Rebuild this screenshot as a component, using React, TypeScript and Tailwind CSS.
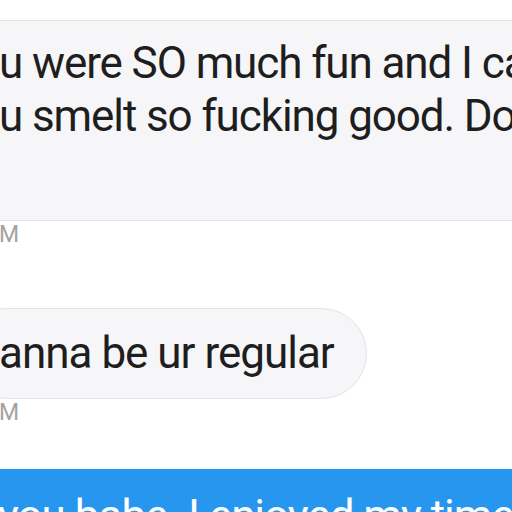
import React from "react";

const font = { fontFamily: "Roboto, 'Liberation Sans', sans-serif" };

const Stamp = ({ text }: { text: string }) => (
  <div className="-ml-[1px] mt-[2px] text-[23px] leading-none text-[#a3a3a3]">
    {text}
  </div>
);

const App = () => {
  return (
    <div
      style={font}
      className="w-[512px] h-[512px] overflow-hidden bg-white flex flex-col text-[#1e1e20]"
    >
      <div className="mt-[20px] h-[201px] -mx-[40px] rounded-[40px] border border-[#e3e3e5] bg-[#f6f6f8] pt-[16px] pl-[38px] overflow-hidden">
        <div className="whitespace-nowrap text-[44px] leading-[53px] tracking-[-1.1px]">
          <p>u were SO much fun and I can't</p>
          <p>u smelt so fucking good. Don't</p>
        </div>
      </div>
      <Stamp text="M" />

      <div className="mt-[62px] h-[91px] w-[407px] -ml-[40px] rounded-full border border-[#e3e3e5] bg-[#f6f6f8] flex items-center pl-[38px]">
        <span className="whitespace-nowrap text-[44px] leading-[53px] tracking-[-1px]">
          anna be ur regular
        </span>
      </div>
      <Stamp text="M" />

      <div className="mt-[45px] flex-1 -mx-[40px] rounded-t-[40px] bg-[#2696ef] pt-[21px] pl-[38px] overflow-hidden">
        <p className="whitespace-nowrap text-[44px] leading-[53px] tracking-[-1px] text-white">
          you babe. I enjoyed my time
        </p>
      </div>
    </div>
  );
};

export default App;
